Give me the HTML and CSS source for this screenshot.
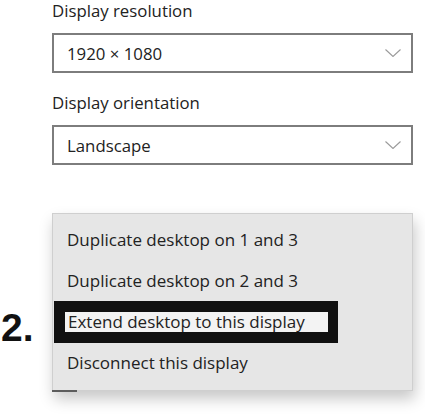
FILE: index.html
```html
<!DOCTYPE html>
<html>
<head>
<meta charset="utf-8">
<link rel="stylesheet" href="styles.css">
</head>
<body>
<div class="page">
  <div class="label">Display resolution</div>
  <div class="select">
    <span class="value">1920 × 1080</span>
    <svg class="chev" width="16" height="8" viewBox="0 0 16 8"><path d="M0.5 0.5 L8 7.5 L15.5 0.5" fill="none" stroke="#9a9a9a" stroke-width="1.1"/></svg>
  </div>
  <div class="label second">Display orientation</div>
  <div class="select">
    <span class="value">Landscape</span>
    <svg class="chev" width="16" height="8" viewBox="0 0 16 8"><path d="M0.5 0.5 L8 7.5 L15.5 0.5" fill="none" stroke="#9a9a9a" stroke-width="1.1"/></svg>
  </div>
  <div class="menu">
    <div class="item">Duplicate desktop on 1 and 3</div>
    <div class="item">Duplicate desktop on 2 and 3</div>
    <div class="item marked"><span class="frame"><span class="hl">Extend desktop to this display</span></span></div>
    <div class="item">Disconnect this display</div>
  </div>
  <div class="step">2.</div>
</div>
</body>
</html>
```
FILE: styles.css
```css
html, body {
  margin: 0;
  background: #ffffff;
}
body {
  font-family: "Open Sans", "Noto Sans", sans-serif;
  color: #1f1f1f;
}
.page {
  position: relative;
  width: 361px;
  padding: 0 0 30px 52px;
}
.label {
  font-size: 16.8px;
  line-height: 22px;
  margin-bottom: 11px;
  color: #222;
}
.label.second {
  margin-top: 19px;
}
.select {
  box-sizing: border-box;
  height: 40px;
  border: 2px solid #7d7d7d;
  display: flex;
  align-items: center;
  justify-content: space-between;
  padding: 0 10px 0 13px;
  font-size: 16.8px;
  color: #222;
}
.chev {
  display: block;
}
.menu {
  position: relative;
  margin-top: 48px;
  box-sizing: border-box;
  height: 178px;
  background: #e6e6e6;
  border: 1px solid #cfcfcf;
  padding-top: 5px;
  box-shadow: 2px 8px 14px rgba(0,0,0,0.22);
}
.menu::after {
  content: "";
  position: absolute;
  left: -1px;
  bottom: -2px;
  width: 25px;
  height: 2px;
  background: #5c5c5c;
}
.item {
  height: 41px;
  line-height: 41px;
  padding-left: 14px;
  font-size: 17px;
  color: #222;
  white-space: nowrap;
}
.item.marked {
  padding-left: 1px;
  display: flex;
  align-items: flex-start;
}
.frame {
  display: block;
  background: #111;
  padding: 11px 10px 11px 11px;
}
.hl {
  display: block;
  width: 260px;
  height: 20px;
  line-height: 20px;
  padding-left: 3px;
  background: #f3f3f3;
}
.step {
  position: absolute;
  left: 1px;
  top: 308px;
  font-family: "Liberation Sans", Arial, sans-serif;
  font-weight: bold;
  font-size: 39px;
  line-height: 39px;
  color: #111;
}
```
